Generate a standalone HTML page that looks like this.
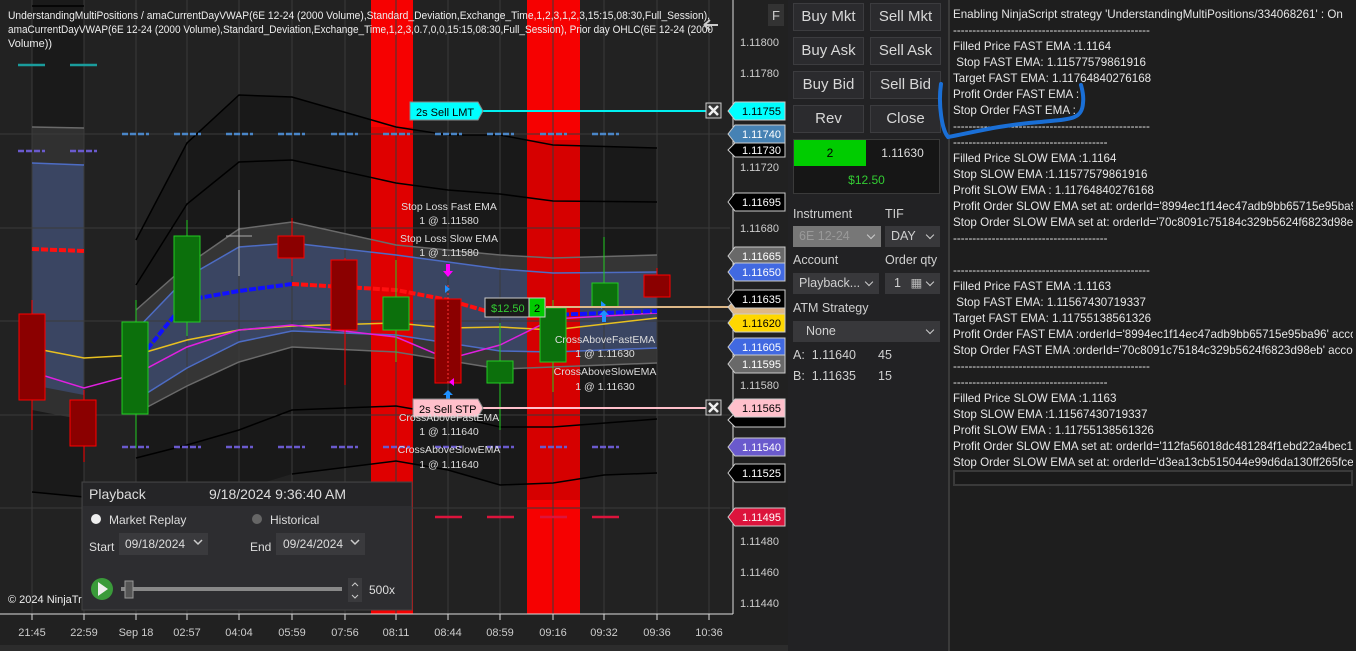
<!DOCTYPE html>
<html><head><meta charset="utf-8"><style>
*{margin:0;padding:0;box-sizing:border-box}
body{width:1356px;height:651px;background:#1c1c1c;overflow:hidden;position:relative;font-family:"Liberation Sans",sans-serif}
.sb{position:absolute;left:788px;top:0;width:160px;height:651px;background:#222224}
.btn{position:absolute;width:71px;height:28px;background:#2b2b2e;border:1px solid #3c3c3f;color:#d8d8d8;font-size:15px;text-align:center;line-height:26px}
.lbl{position:absolute;color:#d0d0d0;font-size:12.5px}
.dd{position:absolute;background:#38383b;color:#d0d0d0;font-size:12.5px;height:21px;line-height:21px;padding-left:6px}
.dd:after{content:"";position:absolute;right:7px;top:6px;width:5px;height:5px;border-right:1.6px solid #ccc;border-bottom:1.6px solid #ccc;transform:rotate(45deg)}
.out{position:absolute;left:948px;top:0;width:408px;height:651px;background:#1e1e1e;border-left:2px solid #3a3a3a}
.out pre{position:absolute;left:3px;top:7px;font-family:"Liberation Sans",sans-serif;font-size:11.6px;line-height:16px;color:#e6e6e6;white-space:pre;width:400px;overflow:hidden}
</style></head><body>
<svg width="788" height="651" style="position:absolute;left:0;top:0" font-family="Liberation Sans, sans-serif">
<rect width="788" height="651" fill="#212121"/>
<rect x="0" y="0" width="730" height="614" fill="#222"/>
<polygon points="136,240 187,143 239,95 292,97 396,127 448,135 500,135 553,145 657,148 657,473 604,475 553,483 500,485 448,470 396,461 292,474 239,490 136,500" fill="#191919"/>
<polygon points="32,0 84,0 84,497 32,492" fill="#1a1a1a"/>
<polygon points="136,310 187,265 239,229 292,222 396,245 500,255 553,258 657,255 657,363 553,367 500,369 396,352 292,347 239,362 187,386 136,413" fill="#353535"/>
<polygon points="32,127 84,128 84,420 32,410" fill="#303030"/>
<polygon points="136,330 187,277 239,247 292,243 396,255 500,269 553,273 657,272 657,348 553,352 500,351 396,335 292,331 239,342 187,368 136,400" fill="#3a4562"/>
<polygon points="32,163 84,165 84,395 32,385" fill="#3a4562"/>
<rect x="371" y="0" width="42" height="614" fill="#ff0000" opacity="0.96"/>
<rect x="527" y="0" width="53" height="614" fill="#ff0000" opacity="0.96"/>
<polygon points="371,127 413,127 413,510 371,510" fill="#c00" opacity="0.55"/>
<polygon points="527,140 580,140 580,500 527,500" fill="#b00" opacity="0.55"/>
<g stroke="#3a3a3a" stroke-width="1">
<line x1="0" y1="134" x2="730" y2="134"/><line x1="0" y1="228" x2="730" y2="228"/><line x1="0" y1="321" x2="730" y2="321"/><line x1="0" y1="415" x2="730" y2="415"/><line x1="0" y1="508" x2="730" y2="508"/>
<line x1="32" y1="0" x2="32" y2="614"/><line x1="84" y1="0" x2="84" y2="614"/><line x1="136" y1="0" x2="136" y2="614"/><line x1="187" y1="0" x2="187" y2="614"/><line x1="239" y1="0" x2="239" y2="614"/><line x1="292" y1="0" x2="292" y2="614"/><line x1="345" y1="0" x2="345" y2="614"/><line x1="396" y1="0" x2="396" y2="614"/><line x1="448" y1="0" x2="448" y2="614"/><line x1="500" y1="0" x2="500" y2="614"/><line x1="553" y1="0" x2="553" y2="614"/><line x1="604" y1="0" x2="604" y2="614"/><line x1="657" y1="0" x2="657" y2="614"/><line x1="709" y1="0" x2="709" y2="614"/>
</g>
<g fill="none" stroke-width="1.5">
<polyline points="136,240 187,143 239,95 292,97 396,127 448,135 500,135 553,145 657,148" stroke="#000"/>
<polyline points="136,285 187,204 239,162 292,160 396,183 448,190 500,194 553,201 657,202" stroke="#000"/>
<polyline points="136,458 187,445 239,430 292,410 396,406 448,415 500,427 553,427 657,419" stroke="#000"/>
<polyline points="32,492 84,497" stroke="#000"/>
<polyline points="292,474 396,461 448,470 500,485 553,483 604,475 657,473" stroke="#000"/>
<polyline points="32,6 84,6" stroke="#000"/>
<polyline points="136,310 187,265 239,229 292,222 396,245 500,255 553,258 657,255" stroke="#6a6a6a"/>
<polyline points="136,413 187,386 239,362 292,347 396,352 500,369 553,367 657,363" stroke="#6a6a6a"/>
<polyline points="32,127 84,128" stroke="#6a6a6a"/>
<polyline points="136,330 187,277 239,247 292,243 396,255 500,269 553,273 657,272" stroke="#4d6cc4"/>
<polyline points="136,400 187,368 239,342 292,331 396,335 500,351 553,352 657,348" stroke="#4d6cc4"/>
<polyline points="32,163 84,165" stroke="#4d6cc4"/>
<polyline points="32,348 84,358 136,355 187,340 239,330 292,326 396,323 448,328 500,327 553,330 657,318" stroke="#e8c020"/>
<polyline points="32,372 84,388 136,374 187,347 239,330 292,325 396,337 448,359 500,345 553,319 657,313" stroke="#e020e0"/>
</g>
<g fill="none" stroke-width="4" stroke-dasharray="7,2">
<polyline points="136,363 187,300 239,291 292,284" stroke="#1010ff"/>
<polyline points="292,284 396,290 448,300 500,315" stroke="#ff1010"/>
<polyline points="553,315 657,311" stroke="#1010ff"/>
<polyline points="32,249 84,251" stroke="#ff1010"/>
</g>
<g stroke-width="2.5" fill="none">
<path d="M18 65h27M70 65h27" stroke="#1a9c9c"/>
<path d="M18 151h27M70 151h27" stroke="#6a5acd" stroke-dasharray="6,2"/>
<path d="M122 134h27M174 134h27M226 134h27M278 134h27M331 134h27M383 134h27M435 134h27M487 134h27M540 134h27M592 134h27" stroke="#4a86c8" stroke-dasharray="6,2"/>
<path d="M122 447h27M174 447h27M226 447h27M278 447h27M331 447h27M383 447h27M435 447h27M487 447h27M540 447h27M592 447h27" stroke="#6a5acd" stroke-dasharray="6,2"/>
<path d="M435 517h27M487 517h27M540 517h27M592 517h27" stroke="#dc143c"/>
</g>
<g stroke-width="1">
<line x1="32" y1="300" x2="32" y2="430" stroke="#f00"/><rect x="19" y="314" width="26" height="86" fill="#8b0000" stroke="#f00"/>
<line x1="84" y1="390" x2="84" y2="462" stroke="#f00"/><rect x="70" y="400" width="26" height="46" fill="#8b0000" stroke="#f00"/>
<line x1="136" y1="300" x2="136" y2="448" stroke="#2c2"/><rect x="122" y="322" width="26" height="92" fill="#0c700c" stroke="#2c2"/>
<line x1="187" y1="220" x2="187" y2="336" stroke="#2c2"/><rect x="174" y="236" width="26" height="86" fill="#0c700c" stroke="#2c2"/>
<line x1="239" y1="190" x2="239" y2="276" stroke="#aaa"/><line x1="226" y1="236" x2="252" y2="236" stroke="#aaa"/>
<line x1="292" y1="218" x2="292" y2="276" stroke="#f00"/><rect x="278" y="236" width="26" height="22" fill="#8b0000" stroke="#f00"/>
<line x1="345" y1="258" x2="345" y2="385" stroke="#f00"/><rect x="331" y="260" width="26" height="70" fill="#8b0000" stroke="#f00"/>
<line x1="396" y1="260" x2="396" y2="362" stroke="#2c2"/><rect x="383" y="297" width="26" height="33" fill="#0c700c" stroke="#2c2"/>
<rect x="435" y="299" width="26" height="84" fill="#8b0000" stroke="#f00"/><line x1="448" y1="285" x2="448" y2="383" stroke="#f33" stroke-dasharray="2,2"/>
<line x1="500" y1="323" x2="500" y2="430" stroke="#2c2"/><rect x="487" y="361" width="26" height="22" fill="#0c700c" stroke="#2c2"/>
<line x1="553" y1="300" x2="553" y2="392" stroke="#2c2"/><rect x="540" y="308" width="26" height="54" fill="#0c700c" stroke="#2c2"/>
<line x1="604" y1="237" x2="604" y2="307" stroke="#2c2"/><rect x="592" y="283" width="26" height="24" fill="#0c700c" stroke="#2c2"/>
<line x1="657" y1="268" x2="657" y2="297" stroke="#f00"/><rect x="644" y="275" width="26" height="22" fill="#8b0000" stroke="#f00"/>
</g>
<path d="M446 264h4v7h3l-5 6-5-6h3z" fill="#f0f"/>
<path d="M445 285l5 4-5 4z" fill="#1e90ff"/>
<path d="M454 378v8l-5-4z" fill="#f0f"/>
<path d="M448 390l5 5h-3v5h-4v-5h-3z" fill="#1e90ff"/>
<path d="M604 310l5 5h-3v7h-4v-7h-3z" fill="#1e90ff"/>
<path d="M601 301l5 4-5 4z" fill="#1e90ff"/>
<line x1="482" y1="111" x2="706" y2="111" stroke="#00f0f0" stroke-width="2"/>
<polygon points="410,102 478,102 483,111 478,120 410,120" fill="#00ffff" stroke="#888"/>
<text x="416" y="116" font-size="11" fill="#000">2s  Sell LMT</text>
<line x1="482" y1="408" x2="706" y2="408" stroke="#ffc0cb" stroke-width="2"/>
<polygon points="413,399 478,399 483,408 478,417 413,417" fill="#ffc0cb" stroke="#888"/>
<text x="419" y="413" font-size="11" fill="#000">2s  Sell STP</text>
<g stroke="#ccc" stroke-width="1"><rect x="706" y="103" width="15" height="15" fill="#333"/><rect x="706" y="400" width="15" height="15" fill="#333"/></g>
<path d="M709 106l9 9M718 106l-9 9M709 403l9 9M718 403l-9 9" stroke="#eee" stroke-width="2.5"/>
<line x1="546" y1="307" x2="730" y2="307" stroke="#deb887" stroke-width="2"/>
<rect x="485" y="298" width="44" height="19" fill="#1a1a1a" stroke="#ccc"/><text x="491" y="312" font-size="11" fill="#3c3">$12.50</text>
<rect x="529" y="298" width="16" height="19" fill="#0c0" stroke="#ccc"/><text x="534" y="312" font-size="11" fill="#000">2</text>
<g font-size="10.5" fill="#ddd" text-anchor="middle">
<text x="449" y="210">Stop Loss Fast EMA</text><text x="449" y="224">1 @ 1.11580</text>
<text x="449" y="242">Stop Loss Slow EMA</text><text x="449" y="256">1 @ 1.11580</text>
<text x="605" y="343">CrossAboveFastEMA</text><text x="605" y="357">1 @ 1.11630</text>
<text x="605" y="375">CrossAboveSlowEMA</text><text x="605" y="390">1 @ 1.11630</text>
<text x="449" y="421">CrossAboveFastEMA</text><text x="449" y="435">1 @ 1.11640</text>
<text x="449" y="453">CrossAboveSlowEMA</text><text x="449" y="468">1 @ 1.11640</text>
</g>
<g font-size="11" fill="#eee">
<text x="8" y="19" textLength="702" lengthAdjust="spacingAndGlyphs">UnderstandingMultiPositions / amaCurrentDayVWAP(6E 12-24 (2000 Volume),Standard_Deviation,Exchange_Time,1,2,3,1,2,3,15:15,08:30,Full_Session),</text>
<text x="8" y="33" textLength="705" lengthAdjust="spacingAndGlyphs">amaCurrentDayVWAP(6E 12-24 (2000 Volume),Standard_Deviation,Exchange_Time,1,2,3,0.7,0,0,15:15,08:30,Full_Session), Prior day OHLC(6E 12-24 (2000</text>
<text x="8" y="47">Volume))</text>
<text x="8" y="603">© 2024 NinjaTrader</text>
</g>
<path d="M704 25h14M704 25l6-5M704 25l6 5" stroke="#ccc" stroke-width="2" fill="none"/>
<line x1="733" y1="0" x2="733" y2="614" stroke="#ddd"/>
<line x1="0" y1="614" x2="733" y2="614" stroke="#ddd"/>
<rect x="768" y="4" width="16" height="22" fill="#333"/><text x="772" y="20" font-size="13" fill="#ccc">F</text>
<g font-size="11" fill="#ccc">
<text x="740" y="46">1.11800</text><text x="740" y="77">1.11780</text><text x="740" y="171">1.11720</text><text x="740" y="232">1.11680</text><text x="740" y="389">1.11580</text><text x="740" y="545">1.11480</text><text x="740" y="576">1.11460</text><text x="740" y="607">1.11440</text>
</g>
<g stroke="#ccc" stroke-width="1" font-size="11">
<polygon points="728,111 735,102 785,102 785,120 735,120" fill="#00ffff"/>
<polygon points="728,134 735,125 785,125 785,143 735,143" fill="#4682b4"/>
<polygon points="728,150 735,143 785,143 785,157 735,157" fill="#000"/>
<polygon points="728,202 735,193 785,193 785,211 735,211" fill="#000"/>
<polygon points="728,256 735,247 785,247 785,265 735,265" fill="#696969"/>
<polygon points="728,272 735,263 785,263 785,281 735,281" fill="#4169e1"/>
<polygon points="728,307 735,300 785,300 785,316 735,316" fill="#deb887"/>
<polygon points="728,299 735,290 785,290 785,308 735,308" fill="#000"/>
<polygon points="728,323 735,314 785,314 785,332 735,332" fill="#ffd700"/>
<polygon points="728,347 735,338 785,338 785,356 735,356" fill="#4169e1"/>
<polygon points="728,364 735,355 785,355 785,373 735,373" fill="#696969"/>
<polygon points="728,420 735,413 785,413 785,427 735,427" fill="#000"/>
<polygon points="728,408 735,399 785,399 785,417 735,417" fill="#ffc0cb"/>
<polygon points="728,447 735,438 785,438 785,456 735,456" fill="#6a5acd"/>
<polygon points="728,473 735,464 785,464 785,482 735,482" fill="#000"/>
<polygon points="728,517 735,508 785,508 785,526 735,526" fill="#dc143c"/>
</g>
<g font-size="11">
<text x="742" y="115" fill="#000">1.11755</text><text x="742" y="138" fill="#fff">1.11740</text><text x="742" y="154" fill="#fff">1.11730</text>
<text x="742" y="206" fill="#fff">1.11695</text><text x="742" y="260" fill="#fff">1.11665</text><text x="742" y="276" fill="#fff">1.11650</text>
<text x="742" y="303" fill="#fff">1.11635</text><text x="742" y="327" fill="#000">1.11620</text><text x="742" y="351" fill="#fff">1.11605</text>
<text x="742" y="368" fill="#fff">1.11595</text><text x="742" y="412" fill="#000">1.11565</text><text x="742" y="451" fill="#fff">1.11540</text>
<text x="742" y="477" fill="#fff">1.11525</text><text x="742" y="521" fill="#fff">1.11495</text>
</g>
<g stroke="#ddd"><path d="M32 614v6M84 614v6M136 614v6M187 614v6M239 614v6M292 614v6M345 614v6M396 614v6M448 614v6M500 614v6M553 614v6M604 614v6M657 614v6M709 614v6"/></g>
<g font-size="11" fill="#ccc" text-anchor="middle">
<text x="32" y="636">21:45</text><text x="84" y="636">22:59</text><text x="136" y="636">Sep 18</text><text x="187" y="636">02:57</text><text x="239" y="636">04:04</text><text x="292" y="636">05:59</text><text x="345" y="636">07:56</text><text x="396" y="636">08:11</text><text x="448" y="636">08:44</text><text x="500" y="636">08:59</text><text x="553" y="636">09:16</text><text x="604" y="636">09:32</text><text x="657" y="636">09:36</text><text x="709" y="636">10:36</text>
</g>
<rect x="0" y="645" width="788" height="6" fill="#2c2c2c"/>
<rect x="82" y="482" width="330" height="128" fill="#2d2d30" stroke="#444"/>
<rect x="83" y="483" width="328" height="23" fill="#252527"/>
<g font-size="14" fill="#ddd"><text x="89" y="499">Playback</text><text x="209" y="499">9/18/2024 9:36:40 AM</text></g>
<g font-size="12" fill="#ddd">
<circle cx="96" cy="519" r="5" fill="#eee"/><text x="109" y="524">Market Replay</text>
<circle cx="257" cy="519" r="5" fill="#666"/><text x="270" y="524">Historical</text>
<text x="89" y="551">Start</text><rect x="119" y="533" width="89" height="22" fill="#3a3a3d"/><text x="125" y="548">09/18/2024</text>
<text x="250" y="551">End</text><rect x="276" y="533" width="89" height="22" fill="#3a3a3d"/><text x="283" y="548">09/24/2024</text>
<text x="369" y="594">500x</text>
</g>
<path d="M194 540l4 4 4-4M351 540l4 4 4-4" stroke="#ccc" stroke-width="1.5" fill="none"/>
<circle cx="102" cy="589" r="11" fill="#3a9a3a"/><path d="M98 582l10 7-10 7z" fill="#eee"/>
<rect x="121" y="587" width="221" height="4" fill="#888"/><rect x="125" y="581" width="8" height="17" fill="#555" stroke="#999"/>
<rect x="348" y="578" width="14" height="24" fill="#3a3a3d"/><path d="M352 586l3-3 3 3M352 595l3 3 3-3" stroke="#ccc" fill="none"/>
</svg>

<div class="sb">
<div class="btn" style="left:5px;top:3px">Buy Mkt</div><div class="btn" style="left:82px;top:3px">Sell Mkt</div>
<div class="btn" style="left:5px;top:37px">Buy Ask</div><div class="btn" style="left:82px;top:37px">Sell Ask</div>
<div class="btn" style="left:5px;top:71px">Buy Bid</div><div class="btn" style="left:82px;top:71px">Sell Bid</div>
<div class="btn" style="left:5px;top:105px">Rev</div><div class="btn" style="left:82px;top:105px">Close</div>
<div style="position:absolute;left:5px;top:139px;width:147px;height:55px;background:#161616;border:1px solid #3a3a3a"></div>
<div style="position:absolute;left:6px;top:140px;width:72px;height:26px;background:#00cc00;color:#000;font-size:12px;text-align:center;line-height:26px">2</div>
<div style="position:absolute;left:78px;top:140px;width:73px;height:26px;color:#ddd;font-size:12px;text-align:center;line-height:26px">1.11630</div>
<div style="position:absolute;left:6px;top:167px;width:145px;height:26px;color:#3c3;font-size:12px;text-align:center;line-height:26px">$12.50</div>
<div class="lbl" style="left:5px;top:207px">Instrument</div><div class="lbl" style="left:97px;top:207px">TIF</div>
<div class="dd" style="left:5px;top:226px;width:88px;background:#777;color:#999">6E 12-24</div>
<div class="dd" style="left:97px;top:226px;width:55px">DAY</div>
<div class="lbl" style="left:5px;top:253px">Account</div><div class="lbl" style="left:97px;top:253px">Order qty</div>
<div class="dd" style="left:5px;top:273px;width:86px">Playback...</div>
<div class="dd" style="left:97px;top:273px;width:55px;padding-left:9px">1 <span style="color:#bbb;margin-left:6px">▦</span></div>
<div class="lbl" style="left:5px;top:301px">ATM Strategy</div>
<div class="dd" style="left:5px;top:321px;width:147px;padding-left:13px">None</div>
<div class="lbl" style="left:5px;top:348px">A:&nbsp; 1.11640</div><div class="lbl" style="left:90px;top:348px">45</div>
<div class="lbl" style="left:5px;top:369px">B:&nbsp; 1.11635</div><div class="lbl" style="left:90px;top:369px">15</div>
</div>

<div class="out"><pre>Enabling NinjaScript strategy 'UnderstandingMultiPositions/334068261' : On
---------------------------------------------------
Filled Price FAST EMA :1.1164
 Stop FAST EMA: 1.11577579861916
Target FAST EMA: 1.11764840276168
Profit Order FAST EMA :
Stop Order FAST EMA :
---------------------------------------------------
----------------------------------------
Filled Price SLOW EMA :1.1164
Stop SLOW EMA :1.11577579861916
Profit SLOW EMA : 1.11764840276168
Profit Order SLOW EMA set at: orderId='8994ec1f14ec47adb9bb65715e95ba96'
Stop Order SLOW EMA set at: orderId='70c8091c75184c329b5624f6823d98eb' accou
----------------------------------------

---------------------------------------------------
Filled Price FAST EMA :1.1163
 Stop FAST EMA: 1.11567430719337
Target FAST EMA: 1.11755138561326
Profit Order FAST EMA :orderId='8994ec1f14ec47adb9bb65715e95ba96' account
Stop Order FAST EMA :orderId='70c8091c75184c329b5624f6823d98eb' account
---------------------------------------------------
----------------------------------------
Filled Price SLOW EMA :1.1163
Stop SLOW EMA :1.11567430719337
Profit SLOW EMA : 1.11755138561326
Profit Order SLOW EMA set at: orderId='112fa56018dc481284f1ebd22a4bec10'
Stop Order SLOW EMA set at: orderId='d3ea13cb515044e99d6da130ff265fce' acc
----------------------------------------</pre>
<div style="position:absolute;left:3px;top:470px;width:400px;height:16px;border:2px solid #3a3a3a;background:#1a1a1a"></div>
</div>
<svg width="160" height="80" style="position:absolute;left:930px;top:75px" fill="none">
<path d="M11 9C8 30 12 55 18 62C40 58 70 50 110 47C140 44 152 45 153 28C154 20 152 14 151 10" stroke="#1a6fd6" stroke-width="4" stroke-linecap="round"/>
</svg>
</body></html>
